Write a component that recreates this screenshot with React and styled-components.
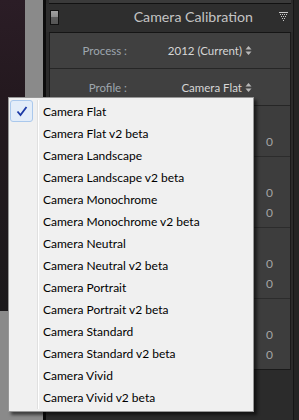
import React from "react";
import styled, { createGlobalStyle } from "styled-components";

const GlobalStyle = createGlobalStyle`
  html, body {
    margin: 0;
    padding: 0;
    background: #2b2b2b;
    overflow: hidden;
  }
`;

const Page = styled.div`
  position: relative;
  display: flex;
  width: 299px;
  height: 420px;
  font-family: Lato, "Noto Sans", "Liberation Sans", sans-serif;
`;

const Canvas = styled.div`
  width: 43px;
  background: #8a8a8a;
`;

const Photo = styled.div`
  width: 25px;
  height: 311px;
  background: linear-gradient(#2b1d26 0%, #24191f 30%, #1b191b 100%);
`;

const Divider = styled.div`
  width: 3px;
  background: #0c0c0c;
`;

const Panel = styled.div`
  width: 247px;
  display: flex;
  flex-direction: column;
  background: #2b2b2b;
`;

const RightEdge = styled.div`
  flex: 1;
  background: #242424;
  border-left: 1px solid #161616;
`;

const TopStrip = styled.div`
  height: 3px;
  margin: 0 2px 0 3px;
  background: #3a3a3a;
  border-bottom: 1px solid #111;
`;

const Header = styled.div`
  height: 28px;
  display: flex;
  align-items: center;
  padding: 0 5px 0 4px;
  background: #2e2e2e;
`;

const Toggle = styled.div`
  width: 7px;
  height: 13px;
  border: 1px solid #111;
  background: linear-gradient(#a0a0a0 0%, #8a8a8a 50%, #5c5c5c 50%, #555 100%);
  margin-top: -2px;
`;

const Title = styled.div`
  flex: 1;
  text-align: right;
  color: #c4c4c4;
  font-size: 14.2px;
  margin-right: 26px;
  margin-top: -3px;
`;

const Box = styled.div`
  margin: 0 2px 0 3px;
  border: 1px solid #1a1a1a;
  border-top-color: #151515;
  background: #3d3d3d;
`;

const SelectRow = styled.div`
  height: ${(p) => p.h}px;
  display: flex;
  align-items: center;
  border-bottom: 1px solid #262626;
  background: #404040;
  font-size: 11.5px;
`;

const Label = styled.div`
  width: 77px;
  text-align: right;
  color: #9ea6ae;
`;

const Value = styled.div`
  flex: 1;
  display: flex;
  justify-content: flex-end;
  align-items: center;
  gap: 3px;
  padding-right: 38px;
  color: #d6d6d6;
`;

const Section = styled.div`
  padding: 25px 0 5px 0;
  border-bottom: ${(p) => (p.last ? "none" : "1px solid #2c2c2c")};
`;

const SliderRow = styled.div`
  height: 20px;
  display: flex;
  align-items: center;
  padding: 0 17px 0 86px;
  font-size: 12px;
`;

const Track = styled.div`
  flex: 1;
  height: 2px;
  margin-right: 12px;
  background: #2a2a2a;
`;

const Num = styled.div`
  width: 20px;
  text-align: right;
  color: #a4a4a4;
`;

const Menu = styled.div`
  position: absolute;
  left: 8px;
  top: 97px;
  width: 244px;
  padding: 2px 0 3px 0;
  background: #f0f0f0;
  border: 1px solid #979797;
  box-shadow: 3px 3px 3px rgba(0, 0, 0, 0.55);
`;

const Separator = styled.div`
  position: absolute;
  left: 28px;
  top: 2px;
  bottom: 2px;
  width: 1px;
  background: #e0e0e0;
  border-right: 1px solid #fff;
`;

const Item = styled.div`
  position: relative;
  height: 22px;
  display: flex;
  align-items: center;
  padding-left: 34px;
  font-size: 12px;
  color: #000;
  white-space: nowrap;
`;

const CheckBox = styled.div`
  position: absolute;
  left: 1px;
  top: 0;
  width: 21px;
  height: 20px;
  border: 1px solid #aac8ec;
  border-radius: 3px;
  background: #e3edf9;
  display: flex;
  align-items: center;
  justify-content: center;
`;

const UpDown = () => (
  <svg width="7" height="11" viewBox="0 0 7 11">
    <path d="M0.5 4.5 L3.5 1 L6.5 4.5 Z" fill="#b8b8b8" />
    <path d="M0.5 6.5 L3.5 10 L6.5 6.5 Z" fill="#b8b8b8" />
  </svg>
);

const CollapseIcon = () => (
  <svg width="9" height="9" viewBox="0 0 9 9" style={{ marginTop: "-3px" }}>
    <rect x="0" y="0" width="9" height="1" fill="#c8c8c8" />
    {[1, 3, 5, 7].map((x) => (
      <rect key={"a" + x} x={x} y="2" width="1" height="1" fill="#c8c8c8" />
    ))}
    {[2, 4, 6].map((x) => (
      <rect key={"b" + x} x={x} y="4" width="1" height="1" fill="#c8c8c8" />
    ))}
    {[3, 5].map((x) => (
      <rect key={"c" + x} x={x} y="6" width="1" height="1" fill="#c8c8c8" />
    ))}
    <rect x="4" y="8" width="1" height="1" fill="#c8c8c8" />
  </svg>
);

const profiles = [
  "Camera Flat",
  "Camera Flat v2 beta",
  "Camera Landscape",
  "Camera Landscape v2 beta",
  "Camera Monochrome",
  "Camera Monochrome v2 beta",
  "Camera Neutral",
  "Camera Neutral v2 beta",
  "Camera Portrait",
  "Camera Portrait v2 beta",
  "Camera Standard",
  "Camera Standard v2 beta",
  "Camera Vivid",
  "Camera Vivid v2 beta",
];

// shadows tint, then red / green / blue primary hue + saturation
const sections = [1, 2, 2, 2];

export default function App() {
  const selected = "Camera Flat";
  return (
    <>
      <GlobalStyle />
      <Page>
        <Canvas>
          <Photo />
        </Canvas>
        <Divider />
        <Panel>
          <TopStrip />
          <Header>
            <Toggle />
            <Title>Camera Calibration</Title>
            <CollapseIcon />
          </Header>
          <Box>
            <SelectRow h={35}>
              <Label>Process :</Label>
              <Value>
                2012 (Current) <UpDown />
              </Value>
            </SelectRow>
            <SelectRow h={36}>
              <Label>Profile :</Label>
              <Value>
                Camera Flat <UpDown />
              </Value>
            </SelectRow>
            {sections.map((count, i) => (
              <Section key={i} last={i === sections.length - 1}>
                {Array.from({ length: count }).map((_, j) => (
                  <SliderRow key={j}>
                    <Track />
                    <Num>0</Num>
                  </SliderRow>
                ))}
              </Section>
            ))}
          </Box>
        </Panel>
        <RightEdge />
        <Menu>
          <Separator />
          {profiles.map((p) => (
            <Item key={p}>
              {p === selected && (
                <CheckBox>
                  <svg width="12" height="11" viewBox="0 0 12 11">
                    <path
                      d="M1.5 5.5 L4.5 9 L10.5 1"
                      fill="none"
                      stroke="#1c3aa6"
                      strokeWidth="1.8"
                    />
                  </svg>
                </CheckBox>
              )}
              {p}
            </Item>
          ))}
        </Menu>
      </Page>
    </>
  );
}
